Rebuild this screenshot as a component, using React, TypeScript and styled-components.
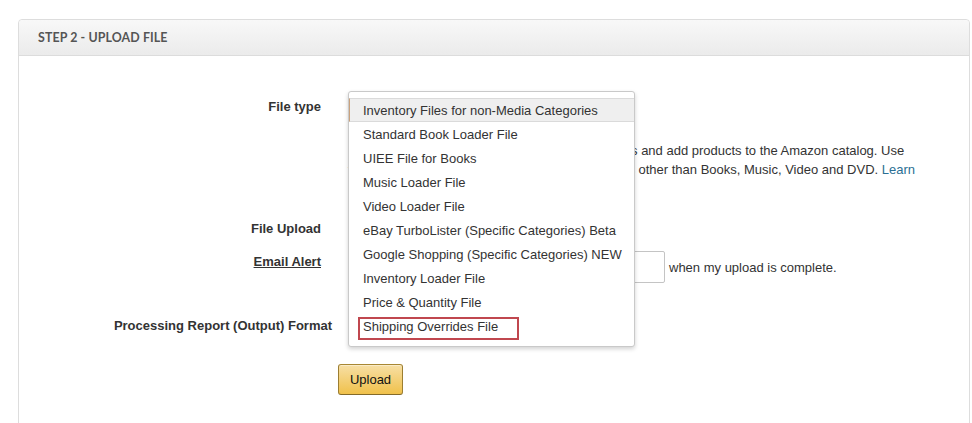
import React from "react";
import styled, { createGlobalStyle } from "styled-components";

const GlobalStyle = createGlobalStyle`
  html, body { margin: 0; padding: 0; background: #ffffff; }
  body { font-family: "Liberation Sans", Arial, sans-serif; color: #333333; }
`;

const Page = styled.div`
  padding: 19px 2px 0 18px;
`;

const Panel = styled.section`
  border: 1px solid #dddddd;
  border-radius: 4px;
  background: #ffffff;
`;

const PanelHeader = styled.header`
  height: 35px;
  display: flex;
  align-items: center;
  padding-left: 19px;
  background: linear-gradient(#f8f8f8, #ebebeb);
  border-bottom: 1px solid #dcdcdc;
  border-radius: 4px 4px 0 0;
`;

const Title = styled.h2`
  margin: 0;
  font-family: Lato, "Liberation Sans", Arial, sans-serif;
  font-weight: 700;
  font-size: 12.4px;
  color: #555555;
  letter-spacing: 0.1px;
`;

const PanelBody = styled.div`
  padding: 40px 0 40px 0;
`;

const FormRow = styled.div<{ $mt: number }>`
  display: grid;
  grid-template-columns: 302px 1fr;
  column-gap: 27px;
  align-items: start;
  margin-top: ${(p) => p.$mt}px;
`;

const Label = styled.div<{ $overhang?: number; $link?: boolean }>`
  text-align: right;
  font-weight: 700;
  font-size: 13px;
  line-height: 19px;
  color: #333333;
  white-space: nowrap;
  margin-right: ${(p) => -(p.$overhang || 0)}px;
  padding-top: 1px;
  text-decoration: ${(p) => (p.$link ? "underline" : "none")};
`;

const Field = styled.div`
  position: relative;
  min-width: 0;
`;

const SelectBox = styled.div`
  width: 286px;
  height: 22px;
  box-sizing: border-box;
  border: 1px solid #c8c8c8;
  border-radius: 3px;
  background: #f6f6f6;
`;

const Description = styled.p`
  margin: 23px 0 0 0;
  font-size: 13px;
  line-height: 19px;
  color: #333333;
  white-space: nowrap;
`;

const Link = styled.a`
  color: #2b6f94;
  text-decoration: none;
`;

const FileBox = styled.div`
  width: 240px;
  height: 22px;
  box-sizing: border-box;
  border: 1px solid #cccccc;
  background: #ffffff;
`;

const Inline = styled.div`
  display: flex;
  align-items: center;
  gap: 4px;
`;

const EmailInput = styled.div`
  width: 317px;
  height: 32px;
  box-sizing: border-box;
  border: 1px solid #c4c4c4;
  border-radius: 2px;
  background: #ffffff;
`;

const Hint = styled.span`
  font-size: 13px;
  color: #333333;
  padding-top: 1px;
`;

const Dropdown = styled.ul`
  position: absolute;
  top: -5px;
  left: 0;
  width: 287px;
  box-sizing: border-box;
  margin: 0;
  padding: 6px 0 8px 0;
  list-style: none;
  background: #ffffff;
  border: 1px solid #c9c9c9;
  border-radius: 3px;
  box-shadow: 0 2px 4px rgba(0, 0, 0, 0.18);
  z-index: 2;
`;

const Option = styled.li<{ $active?: boolean }>`
  height: 24px;
  box-sizing: border-box;
  padding-left: ${(p) => (p.$active ? 13 : 14)}px;
  font-size: 13px;
  color: #333333;
  white-space: nowrap;
  background: ${(p) => (p.$active ? "#efefef" : "transparent")};
  border: ${(p) => (p.$active ? "1px solid #dadada" : "none")};
  border-left: ${(p) => (p.$active ? "1px solid #c9a27e" : "none")};
  border-right: none;
  line-height: ${(p) => (p.$active ? "23px" : "25px")};
`;

const Marked = styled.span`
  display: inline-block;
  vertical-align: top;
  box-sizing: border-box;
  width: 161px;
  height: 23px;
  margin: 3px 0 0 -5px;
  padding-left: 3px;
  line-height: 15px;
  border: 2px solid #c0474f;
`;

const Actions = styled.div`
  margin-top: 27px;
  padding-left: 319px;
`;

const UploadButton = styled.button`
  width: 65px;
  height: 31px;
  padding: 0;
  font-family: "Liberation Sans", Arial, sans-serif;
  font-size: 13px;
  color: #111111;
  background: linear-gradient(#f7dfa5, #f0c14b);
  border: 1px solid;
  border-color: #a88734 #9c7e31 #846a29;
  border-radius: 3px;
  box-shadow: inset 0 1px 0 rgba(255, 255, 255, 0.4);
`;

const options = [
  "Inventory Files for non-Media Categories",
  "Standard Book Loader File",
  "UIEE File for Books",
  "Music Loader File",
  "Video Loader File",
  "eBay TurboLister (Specific Categories) Beta",
  "Google Shopping (Specific Categories) NEW",
  "Inventory Loader File",
  "Price & Quantity File",
  "Shipping Overrides File",
];

export default function App() {
  return (
    <>
      <GlobalStyle />
      <Page>
        <Panel>
          <PanelHeader>
            <Title>STEP 2 - UPLOAD FILE</Title>
          </PanelHeader>
          <PanelBody>
            <FormRow $mt={0}>
              <Label>File type</Label>
              <Field>
                <SelectBox />
                <Description>
                  Use this file to make new product and offer listings and add products to the Amazon catalog. Use
                  <br />
                  the template for new products in all the categories other than Books, Music, Video and DVD.{" "}
                  <Link href="#">Learn</Link>
                  <br />
                  <Link href="#">more</Link>
                </Description>
                <Dropdown>
                  {options.map((o, i) => (
                    <Option key={o} $active={i === 0}>
                      {i === options.length - 1 ? <Marked>{o}</Marked> : o}
                    </Option>
                  ))}
                </Dropdown>
              </Field>
            </FormRow>
            <FormRow $mt={20}>
              <Label>File Upload</Label>
              <Field>
                <FileBox />
              </Field>
            </FormRow>
            <FormRow $mt={11}>
              <Label $link>Email Alert</Label>
              <Field>
                <Inline>
                  <EmailInput />
                  <Hint>when my upload is complete.</Hint>
                </Inline>
              </Field>
            </FormRow>
            <FormRow $mt={32}>
              <Label $overhang={11}>Processing Report (Output) Format</Label>
              <Field>
                <SelectBox />
              </Field>
            </FormRow>
            <Actions>
              <UploadButton>Upload</UploadButton>
            </Actions>
          </PanelBody>
        </Panel>
      </Page>
    </>
  );
}
